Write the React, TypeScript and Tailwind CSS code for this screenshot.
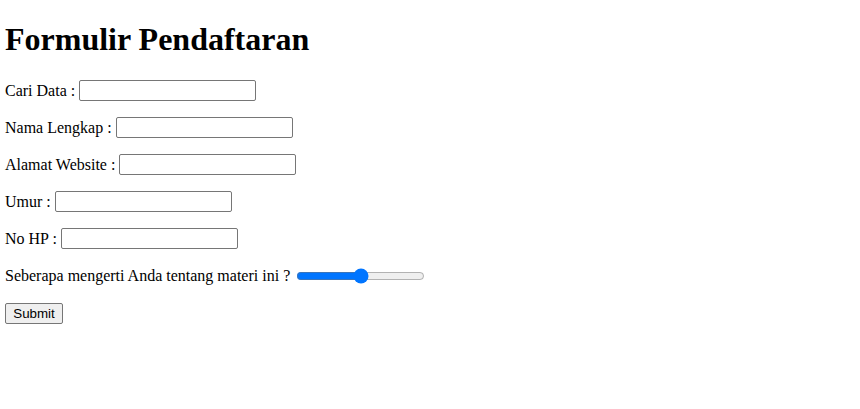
export default function App() {
  const field = "w-[177px] h-[21px] ml-[4px] border border-[#767676] rounded-[2px] bg-white px-[2px] py-[1px] text-[13.33px] [font-family:'Liberation_Sans',Arial,sans-serif]"

  const rows = [
    "Cari Data :",
    "Nama Lengkap :",
    "Alamat Website :",
    "Umur :",
    "No HP :",
  ]

  return (
    <div className="h-[409px] overflow-hidden bg-white px-[5px] pt-[21px] text-black text-[16px] [font-family:'Liberation_Serif','Times_New_Roman',serif]">
      <h1 className="m-0 h-[37px] text-[32px] font-bold leading-[37px]">Formulir Pendaftaran</h1>
      <form onSubmit={(e) => e.preventDefault()} className="mt-[22px] flex flex-col gap-4">
        {rows.map((label, i) => (
          <div key={i} className="flex h-[21px] items-center">
            <span>{label}</span>
            <input type="text" className={field} />
          </div>
        ))}
        <div className="flex h-[21px] items-center">
          <span>Seberapa mengerti Anda tentang materi ini ?</span>
          <input
            type="range"
            min={0}
            max={100}
            defaultValue={50}
            className="ml-[6px] w-[129px] accent-[#0075ff]"
          />
        </div>
        <div className="mt-[1px] flex h-[21px] items-center">
          <button
            type="submit"
            className="h-[21px] w-[58px] border border-[#767676] rounded-[2px] bg-[#efefef] text-[13.33px] leading-none [font-family:'Liberation_Sans',Arial,sans-serif]"
          >
            Submit
          </button>
        </div>
      </form>
    </div>
  )
}
